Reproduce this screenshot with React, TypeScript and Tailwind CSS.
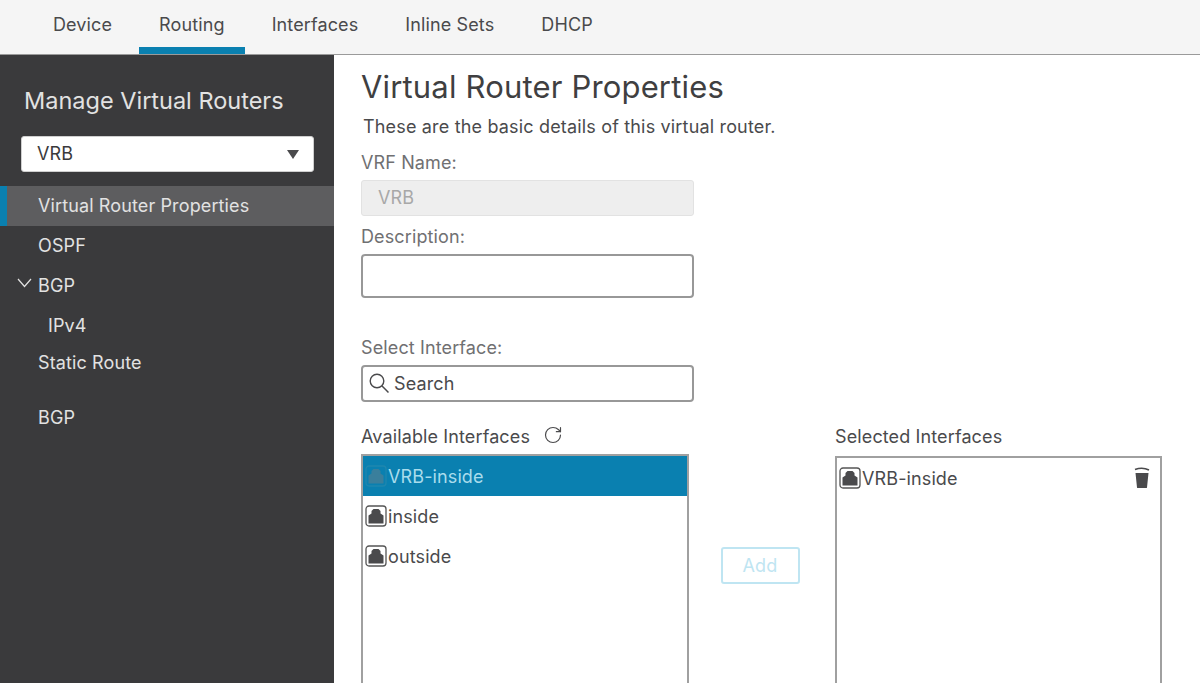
import { RotateCw } from "lucide-react";

const tabs = ["Device", "Routing", "Interfaces", "Inline Sets", "DHCP"];

const PortIcon = ({ faded }: { faded?: boolean }) => (
  <svg width="22" height="22" viewBox="0 0 22 22" className="shrink-0">
    <rect
      x="1"
      y="1"
      width="20"
      height="20"
      rx="3"
      fill="none"
      stroke={faded ? "#1f86ae" : "#555"}
      strokeWidth="1.3"
    />
    <path
      d="M3.5 18.5V10.5L6.5 8.5V6L8.5 4H13.5L15.5 6V8.5L18.5 10.5V18.5Z"
      fill={faded ? "#3a7f9c" : "#4a4a4c"}
    />
  </svg>
);

const TrashIcon = () => (
  <svg width="16" height="22" viewBox="0 0 16 22">
    <path d="M1 2.5C5 1 11 1 15 3" fill="none" stroke="#4a4a4c" strokeWidth="1.6" />
    <path d="M1.5 6H14.5L13 20.5C13 21 12.5 21 12 21H4C3.5 21 3 21 3 20.5Z" fill="#4a4a4c" />
  </svg>
);

const SearchIcon = () => (
  <svg width="21" height="21" viewBox="0 0 21 21" className="shrink-0">
    <circle cx="8" cy="8" r="6.8" fill="none" stroke="#4a4a4c" strokeWidth="1.4" />
    <path d="M12.8 12.8L19.5 19.5" fill="none" stroke="#4a4a4c" strokeWidth="1.5" />
  </svg>
);

const App = () => {
  return (
    <div className="w-[1200px] h-[683px] overflow-hidden flex flex-col bg-white font-['Inter',sans-serif] text-[#4a4a4c] tracking-[0.12px]">
      <div className="flex h-[55px] shrink-0 pl-[33px] gap-[7px] bg-[#f5f5f5] border-b border-[#9a9a9a]">
        {tabs.map((t) => (
          <div
            key={t}
            className={`px-5 pt-[12px] text-[18px] leading-[26px] border-b-[7px] ${
              t === "Routing" ? "border-[#0a80b0]" : "border-transparent"
            }`}
          >
            {t}
          </div>
        ))}
      </div>
      <div className="flex flex-1 min-h-0">
        <div className="w-[334px] shrink-0 bg-[#3a3a3c] text-[#e2e2e2] flex flex-col">
          <div className="shrink-0 pl-[24px] pt-[29px] text-[23.5px] leading-[34px] tracking-normal">Manage Virtual Routers</div>
          <div className="shrink-0 ml-[21px] mt-[18px] w-[293px] h-[36px] bg-white rounded-[3px] border border-[#cfcfcf] flex items-center justify-between pl-[15px] pr-[14px] text-[#3a3a3c] text-[18px]">
            <span className="pb-[2px]">VRB</span>
            <span className="w-0 h-0 border-x-[6px] border-x-transparent border-t-[9px] border-t-[#4a4a4c]" />
          </div>
          <div className="shrink-0 mt-[14px] h-[40px] flex items-center bg-[#5d5d5f] border-l-[7px] border-[#0a80b0] pl-[31px] pb-[2px] text-[18px]">
            Virtual Router Properties
          </div>
          <div className="shrink-0 h-[40px] flex items-center pl-[38px] pb-[2px] text-[18px]">OSPF</div>
          <div className="shrink-0 h-[40px] flex items-center pl-[17px] pb-[2px] text-[18px]">
            <svg width="15" height="10" viewBox="0 0 15 10" className="mr-[6px] -mt-[4px]">
              <path d="M1 1L7.5 8.5L14 1" fill="none" stroke="#e2e2e2" strokeWidth="1.2" />
            </svg>
            BGP
          </div>
          <div className="shrink-0 h-[37px] flex items-center pl-[48px] text-[18px] mt-[1px]">IPv4</div>
          <div className="shrink-0 h-[36px] flex items-center pl-[38px] text-[18px]">Static Route</div>
          <div className="shrink-0 h-[40px] mt-[17px] flex items-center pl-[38px] text-[18px]">BGP</div>
        </div>
        <div className="flex-1 pl-[27px] flex flex-col">
          <div className="shrink-0 pt-[12px] text-[31px] leading-[40px] tracking-[0.17px] text-[#3f3f41]">Virtual Router Properties</div>
          <div className="shrink-0 mt-[8px] pl-[2px] text-[18px] leading-[24px] tracking-[0.17px]">
            These are the basic details of this virtual router.
          </div>
          <div className="shrink-0 mt-[12px] text-[18px] leading-[24px] text-[#707072]">VRF Name:</div>
          <div className="shrink-0 mt-[5px] w-[333px] h-[36px] bg-[#eeeeee] border border-[#e2e2e2] rounded-[3px] flex items-center pl-[16px] pb-[2px] text-[18px] text-[#a8a8a8]">
            VRB
          </div>
          <div className="shrink-0 mt-[9px] text-[18px] leading-[24px] text-[#707072]">Description:</div>
          <div className="shrink-0 mt-[5px] w-[333px] h-[44px] bg-white border-2 border-[#989898] rounded-[4px]" />
          <div className="shrink-0 mt-[38px] text-[18px] leading-[24px] text-[#707072]">Select Interface:</div>
          <div className="shrink-0 mt-[5px] w-[333px] h-[37px] bg-white border-2 border-[#989898] rounded-[4px] flex items-center pl-[6px] text-[18px] gap-[4px]">
            <SearchIcon />
            Search
          </div>
          <div className="shrink-0 flex mt-[22px]">
            <div className="w-[328px] shrink-0">
              <div className="flex items-center h-[24px] text-[18px]">
                Available Interfaces
                <RotateCw size={20} strokeWidth={1.4} className="ml-[13px] -mt-[2px]" />
              </div>
              <div className="mt-[6px] h-[300px] border-2 border-[#a0a0a0] border-b-0 text-[18px]">
                <div className="h-[40px] bg-[#0a80b0] text-[#a9dcec] flex items-center pl-[2px] gap-[1px]">
                  <PortIcon faded />
                  VRB-inside
                </div>
                <div className="h-[40px] flex items-center pl-[2px] gap-[1px]">
                  <PortIcon />
                  inside
                </div>
                <div className="h-[40px] flex items-center pl-[2px] gap-[1px]">
                  <PortIcon />
                  outside
                </div>
              </div>
            </div>
            <div className="w-[142px] shrink-0 flex justify-center pt-[123px]">
              <div className="w-[79px] h-[37px] border-2 border-[#bfe5f2] rounded-[3px] flex items-center justify-center text-[18px] text-[#bfe5f2]">
                Add
              </div>
            </div>
            <div className="w-[327px] shrink-0 ml-[4px]">
              <div className="h-[24px] flex items-center text-[18px]">Selected Interfaces</div>
              <div className="mt-[8px] h-[300px] border-2 border-[#a0a0a0] border-b-0 text-[18px]">
                <div className="h-[40px] flex items-center pl-[2px] pr-[10px] gap-[1px]">
                  <PortIcon />
                  <span className="flex-1">VRB-inside</span>
                  <TrashIcon />
                </div>
              </div>
            </div>
          </div>
        </div>
      </div>
    </div>
  );
};

export default App;
